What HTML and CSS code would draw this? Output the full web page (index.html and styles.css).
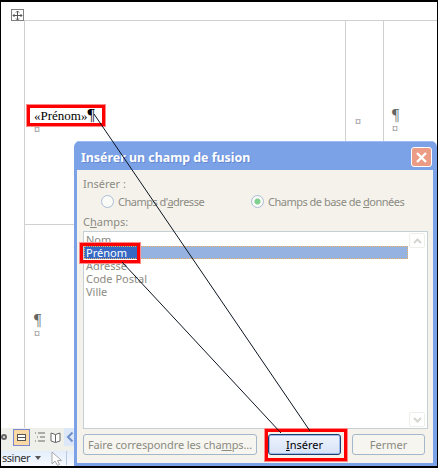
FILE: index.html
```html
<!DOCTYPE html>
<html lang="fr">
<head>
  <meta charset="UTF-8">
  <title>Insérer un champ de fusion</title>
  <link rel="stylesheet" href="styles.css">
</head>
<body>
  <div class="frame">
    <div class="doc">
      <div class="handle-row">
        <div class="move-handle">
          <svg width="11" height="11" viewBox="0 0 11 11">
            <path d="M5.500 1V10M1 5.500H10M4 2.500L5.500 1L7 2.500M4 8.500L5.500 10L7 8.500M2.500 4L1 5.500L2.500 7M8.500 4L10 5.500L8.500 7" fill="none" stroke="#555" stroke-width="1"/>
          </svg>
        </div>
      </div>
      <div class="table">
        <div class="cell cell-main">
          <p class="field">«Prénom»<span class="pilcrow-dark">¶</span></p>
          <p class="mark">¤</p>
        </div>
        <div class="cell cell-narrow"><p class="mark">¤</p></div>
        <div class="cell cell-last">
          <p class="pilcrow">¶</p>
          <p class="mark">¤</p>
        </div>
        <div class="cell cell-main row-two">
          <p class="pilcrow">¶</p>
          <p class="mark">¤</p>
        </div>
        <div class="cell row-two"></div>
        <div class="cell row-two cell-last"></div>
      </div>
      <div class="toolbar">
        <span class="tool-cut"></span>
        <span class="tool-on"><i></i></span>
        <svg width="14" height="12" viewBox="0 0 14 12"><path d="M2 2H3M5 2H12M4 6H5M7 6H12M2 10H3M5 10H12" stroke="#666" fill="none"/></svg>
        <svg width="11" height="12" viewBox="0 0 11 12"><path d="M1 2L5.500 3.500L10 2V10L5.500 11.500L1 10ZM5.500 3.500V11.500" stroke="#666" fill="#fff"/></svg>
        <span class="tool-prev">
          <svg width="8" height="12" viewBox="0 0 8 12"><path d="M6.500 1.500L2 6L6.500 10.500" stroke="#6f8fc8" stroke-width="2" fill="none"/></svg>
        </span>
      </div>
      <div class="drawbar">
        <span class="draw-label">ssiner</span>
        <span class="draw-caret"></span>
        <svg width="12" height="15" viewBox="0 0 12 15"><path d="M1 1V13L4 10L6.500 14.500L8.500 13.500L6.500 9.500H10.500Z" fill="#fff" stroke="#a8a8a8"/></svg>
        <span class="draw-sep"></span>
      </div>
    </div>

    <div class="dialog">
      <div class="titlebar">
        <span class="title">Insérer un champ de fusion</span>
        <span class="close">
          <svg width="13" height="13" viewBox="0 0 13 13"><path d="M2 2L11 11M11 2L2 11" stroke="#fff" stroke-width="2.400"/></svg>
        </span>
      </div>
      <div class="body">
        <p class="legend">Insérer :</p>
        <div class="radios">
          <label class="radio"><span class="dot"></span><span>Champs d'<u>a</u>dresse</span></label>
          <label class="radio radio-on"><span class="dot"></span><span>Champs de base de <u>d</u>onnées</span></label>
        </div>
        <p class="legend legend-fields">C<u>h</u>amps:</p>
        <div class="listbox">
          <ul class="items">
            <li>Nom</li>
            <li class="selected"><span>Prénom</span></li>
            <li>Adresse</li>
            <li>Code Postal</li>
            <li>Ville</li>
          </ul>
          <div class="scrollbar">
            <span class="arrow"><svg width="9" height="6" viewBox="0 0 9 6"><path d="M1 5L4.500 1.500L8 5" stroke="#d6d6d0" stroke-width="2" fill="none"/></svg></span>
            <span class="arrow"><svg width="9" height="6" viewBox="0 0 9 6"><path d="M1 1L4.500 4.500L8 1" stroke="#d6d6d0" stroke-width="2" fill="none"/></svg></span>
          </div>
        </div>
        <div class="buttons">
          <button class="btn btn-match">Faire correspondre les cha<u>m</u>ps...</button>
          <button class="btn btn-insert"><u>I</u>nsérer</button>
          <button class="btn btn-close">Fermer</button>
        </div>
      </div>
    </div>

    <span class="callout callout-field"></span>
    <span class="callout callout-item"></span>
    <span class="callout callout-insert"></span>
    <svg class="arrows" width="438" height="468" viewBox="0 0 438 468">
      <path d="M94 114L310 431M122 262L281 433" stroke="#0c1420" stroke-width="1" fill="none"/>
    </svg>
  </div>
</body>
</html>
```

FILE: styles.css
```css
* {
  box-sizing: border-box;
}
html, body {
  margin: 0;
  height: 100%;
  overflow: hidden;
}
p {
  margin: 0;
}
.frame {
  position: relative;
  width: 438px;
  height: 468px;
  border: solid #000;
  border-width: 2px 1px 2px 1px;
  background: #fff;
  overflow: hidden;
}
.doc {
  display: flex;
  flex-direction: column;
  height: 100%;
  font-family: "Liberation Serif", serif;
}
.handle-row {
  height: 18px;
  padding: 7px 0 0 10px;
}
.move-handle {
  width: 13px;
  height: 12px;
  border: 1px solid #808080;
  display: flex;
  align-items: center;
  justify-content: center;
}
.table {
  display: grid;
  grid-template-columns: 321px 38px 1fr;
  grid-template-rows: 203px 205px;
  margin-left: 23px;
  border-top: 1px solid #d0d0d0;
}
.cell {
  border-left: 1px solid #d0d0d0;
}
.row-two {
  border-top: 1px solid #d0d0d0;
  border-bottom: 1px solid #d0d0d0;
}
.cell-main {
  padding: 86px 0 0 9px;
}
.row-two.cell-main {
  padding-top: 87px;
}
.cell-narrow {
  padding: 95px 0 0 9px;
}
.cell-last {
  padding: 86px 0 0 8px;
}
.field {
  font-size: 13px;
  line-height: 16px;
  color: #000;
  white-space: nowrap;
}
.pilcrow, .pilcrow-dark {
  font-size: 16px;
  line-height: 16px;
  color: #666;
}
.pilcrow-dark {
  color: #000;
}
.mark {
  font-size: 12px;
  line-height: 13px;
  color: #777;
}
.toolbar {
  display: flex;
  align-items: center;
  gap: 3px;
  height: 24px;
  margin-top: -1px;
  background: #f0f0ea;
  padding: 0 0 4px 3px;
}
.tool-cut {
  width: 6px;
  height: 6px;
  margin: 0 3px 0 -3px;
  border: 2px solid #666;
  border-radius: 50%;
}
.tool-on {
  display: flex;
  align-items: center;
  justify-content: center;
  width: 17px;
  height: 17px;
  background: #fad9a5;
  border: 1px solid #7b86d0;
}
.tool-on i {
  width: 9px;
  height: 7px;
  border: 1px solid #555;
  background: linear-gradient(#fff 2px, #555 2px, #555 3px, #fff 3px);
}
.tool-prev {
  display: flex;
  align-items: center;
  justify-content: center;
  width: 11px;
  height: 18px;
  background: #dce7f8;
}
.drawbar {
  display: flex;
  align-items: center;
  height: 16px;
  background: linear-gradient(#e3edfb, #f7faff);
  font-family: "Noto Sans", sans-serif;
  font-size: 11px;
  line-height: 14px;
  color: #333;
  padding-left: 1px;
}
.draw-label {
  letter-spacing: -0.500px;
}
.draw-caret {
  width: 0;
  height: 0;
  margin: 0 10px 0 5px;
  border: 3px solid transparent;
  border-top: 4px solid #555;
  border-bottom: 0;
}
.draw-sep {
  width: 1px;
  height: 14px;
  margin-left: 3px;
  background: #b8c8e0;
}

.dialog {
  position: absolute;
  left: 73px;
  top: 139px;
  width: 363px;
  height: 326px;
  display: flex;
  flex-direction: column;
  background: #7ba2e7;
  border-radius: 6px 6px 0 0;
  padding: 0 4px 4px 3px;
  font-family: "Noto Sans", sans-serif;
  font-size: 11px;
  color: #8b8b82;
}
.titlebar {
  display: flex;
  align-items: center;
  justify-content: space-between;
  height: 29px;
  padding: 2px 1px 0 4px;
  flex: none;
  border-top: 1px solid #9cbcf2;
}
.title {
  color: #fff;
  font-weight: bold;
  font-size: 12.400px;
  text-shadow: 1px 1px 0 #6487cf;
}
.close {
  display: flex;
  align-items: center;
  justify-content: center;
  width: 21px;
  height: 20px;
  background: #ec9b84;
  border: 1px solid #fff;
  border-radius: 3px;
}
.body {
  flex: 1;
  display: flex;
  flex-direction: column;
  background: #f5f2ec;
  padding: 6px 5px 0 6px;
}
.legend {
  line-height: 16px;
}
.radios {
  display: flex;
  height: 18px;
  padding-left: 18px;
  align-items: center;
}
.radio {
  display: flex;
  align-items: center;
  gap: 4px;
  width: 150px;
  white-space: nowrap;
  letter-spacing: -0.500px;
}
.dot {
  width: 13px;
  height: 13px;
  border-radius: 50%;
  border: 1px solid #a9bdd6;
  background: #fafaf6;
  flex: none;
}
.radio-on .dot {
  background: radial-gradient(circle, #7fcf8f 0 2.500px, #fafaf6 3.500px);
}
.legend-fields {
  margin-top: 4px;
}
.listbox {
  display: flex;
  height: 198px;
  margin-top: 1px;
  background: #fff;
  border: 1px solid #c5cfd6;
  flex: none;
}
.items {
  flex: 1;
  list-style: none;
  margin: 0;
  padding: 1px 0 0;
  line-height: 13px;
}
.items li {
  padding-left: 2px;
  height: 13px;
}
.items .selected {
  padding-left: 0;
  background: #96b2e0;
  outline: 1px dotted #e8b060;
  outline-offset: -1px;
  color: #fff;
}
.selected span {
  display: block;
  width: 54px;
  padding-left: 2px;
  background: #3569c4;
}
.scrollbar {
  width: 19px;
  display: flex;
  flex-direction: column;
  justify-content: space-between;
  padding: 1px 2px 1px 1px;
}
.arrow {
  display: flex;
  align-items: center;
  justify-content: center;
  height: 15px;
  border: 1px solid #eeeeea;
  border-radius: 2px;
}
.buttons {
  display: flex;
  margin-top: 5px;
}
.btn {
  height: 21px;
  padding: 0;
  border: 1px solid #a4b8cc;
  border-radius: 3px;
  background: #f6f5f0;
  font: inherit;
  line-height: 14px;
  color: #8b8b82;
}
.btn-match {
  width: 174px;
  letter-spacing: -0.100px;
}
.btn-insert {
  width: 73px;
  margin-left: 11px;
  border-color: #1c3f6e;
  background: linear-gradient(#eef3fc, #d6e2f7);
  box-shadow: inset 0 0 0 1px #9db8ea;
  color: #000;
}
.btn-close {
  width: 73px;
  margin-left: 11px;
}

.callout {
  position: absolute;
  border: 3px solid #f00;
  outline: 1px solid #ff8a8a;
}
.callout-field {
  left: 26px;
  top: 103px;
  width: 78px;
  height: 21px;
}
.callout-item {
  left: 79px;
  top: 241px;
  width: 60px;
  height: 20px;
}
.callout-insert {
  left: 264px;
  top: 427px;
  width: 82px;
  height: 32px;
}
.arrows {
  position: absolute;
  left: -1px;
  top: -2px;
  pointer-events: none;
}
```
